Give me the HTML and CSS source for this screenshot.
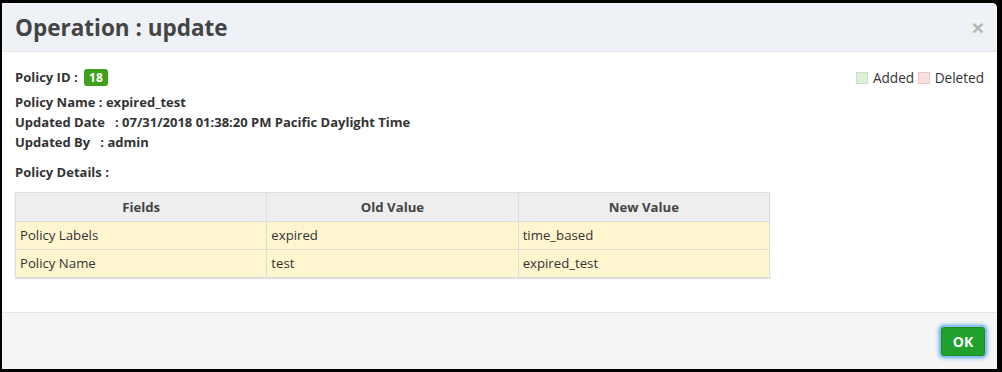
FILE: index.html
```html
<!DOCTYPE html>
<html lang="en">
<head>
  <meta charset="UTF-8">
  <title>Operation : update</title>
  <link rel="stylesheet" href="styles.css">
</head>
<body>

<div class="modal">
  <div class="modal-header">
    <h3>Operation : update</h3>
    <button class="close">&times;</button>
  </div>

  <div class="modal-body">
    <div class="top">
      <div class="info">
        <p><b>Policy ID :</b> <span class="badge">18</span></p>
        <p><b>Policy Name : expired_test</b></p>
        <p><b>Updated Date &nbsp;&nbsp;: 07/31/2018 01:38:20 PM Pacific Daylight Time</b></p>
        <p><b>Updated By &nbsp;&nbsp;: admin</b></p>
        <p class="details"><b>Policy Details :</b></p>
      </div>
      <div class="legend">
        <span class="box added"></span>Added
        <span class="box deleted"></span>Deleted
      </div>
    </div>

    <table class="diff">
      <thead>
        <tr>
          <th>Fields</th>
          <th>Old Value</th>
          <th>New Value</th>
        </tr>
      </thead>
      <tbody>
        <tr>
          <td>Policy Labels</td>
          <td>expired</td>
          <td>time_based</td>
        </tr>
        <tr>
          <td>Policy Name</td>
          <td>test</td>
          <td>expired_test</td>
        </tr>
      </tbody>
    </table>
  </div>

  <div class="modal-footer">
    <button class="btn-ok">OK</button>
  </div>
</div>

</body>
</html>
```

FILE: styles.css
```css
html, body {
  margin: 0;
  padding: 0;
  height: 100%;
  background: #000;
  font-family: "Open Sans", "Liberation Sans", sans-serif;
  color: #333;
}

.modal {
  margin: 3px 5px 0 2px;
  height: 366px;
  background: #fff;
  border-radius: 0 5px 0 0;
  display: flex;
  flex-direction: column;
  overflow: hidden;
}

.modal-header {
  background: #eef1f6;
  border-bottom: 1px solid #e5e5e5;
  height: 48px;
  display: flex;
  align-items: center;
  justify-content: space-between;
  padding: 0 13px 0 13px;
}

.modal-header h3 {
  margin: 0;
  font-size: 22.5px;
  font-weight: 700;
  color: #444;
}

.close {
  border: none;
  background: none;
  font-size: 21px;
  font-weight: 700;
  color: #b4b4b4;
  padding: 0;
  line-height: 1;
  cursor: pointer;
  font-family: "Liberation Sans", sans-serif;
}

.modal-body {
  flex: 1;
  padding: 15px 13px 0 13px;
}

.top {
  display: flex;
  justify-content: space-between;
}

.info p {
  margin: 0;
  font-size: 13px;
  line-height: 20px;
  color: #333;
}

.info p:first-child {
  margin-bottom: 5px;
}

.info .details {
  margin-top: 10px;
}

.badge {
  display: inline-block;
  background: #3ea01b;
  color: #fff;
  font-weight: 700;
  font-size: 12px;
  line-height: 17px;
  padding: 0 5px;
  border-radius: 3px;
  margin-left: 3px;
}

.legend {
  font-size: 13.6px;
  color: #333;
  padding-top: 1px;
  margin-right: 0;
}

.box {
  display: inline-block;
  width: 10px;
  height: 10px;
  vertical-align: -1px;
  margin-right: 5px;
}

.added {
  background: #dff0d8;
  border: 1px solid #c9e2bf;
}

.deleted {
  background: #f9e0e0;
  border: 1px solid #efc6c6;
}

.diff {
  margin-top: 10px;
  width: 755px;
  border-collapse: collapse;
  font-size: 13.2px;
  box-shadow: 0 1px 1px rgba(0, 0, 0, 0.12);
  table-layout: fixed;
}

.diff th {
  background: #eee;
  font-weight: 700;
  color: #444;
  line-height: 18px;
  padding: 5px 4px;
  border: 1px solid #ddd;
  text-align: center;
}

.diff td {
  background: #fff5cf;
  line-height: 19px;
  padding: 4px 4px;
  border: 1px solid #ddd;
  color: #333;
}

.modal-footer {
  background: #f5f5f5;
  border-top: 1px solid #e5e5e5;
  height: 56px;
  display: flex;
  align-items: center;
  justify-content: flex-end;
  padding: 0 12px;
}

.btn-ok {
  background: #20a12b;
  color: #fff;
  border: 1px solid #1a8a24;
  border-radius: 3px;
  font-family: "Open Sans", "Liberation Sans", sans-serif;
  font-weight: 700;
  font-size: 14px;
  width: 44px;
  height: 29px;
  box-shadow: 0 0 0 2px #8fc1ec, 0 0 4px 2px #66afe9;
  cursor: pointer;
}
```
